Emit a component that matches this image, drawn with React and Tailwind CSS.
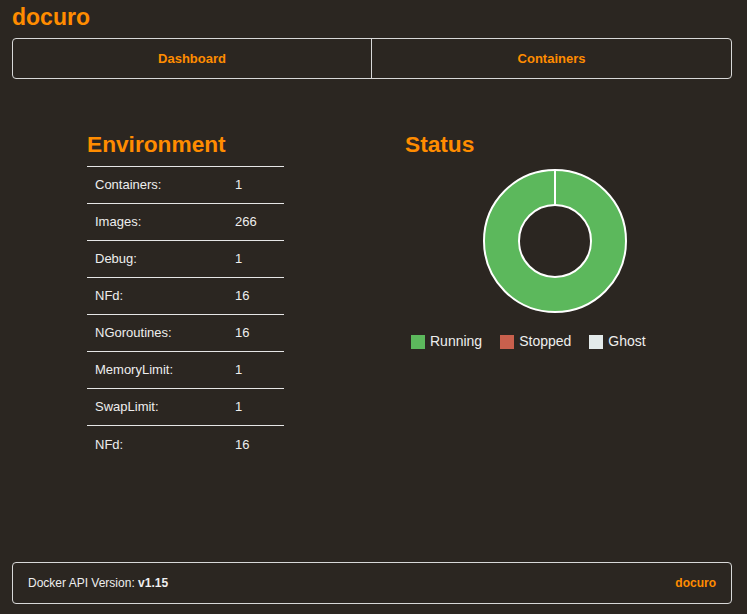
import React from 'react';

const env = [
  ['Containers:', '1'],
  ['Images:', '266'],
  ['Debug:', '1'],
  ['NFd:', '16'],
  ['NGoroutines:', '16'],
  ['MemoryLimit:', '1'],
  ['SwapLimit:', '1'],
  ['NFd:', '16'],
];

const legend = [
  ['Running', 'bg-[#5cb85c]'],
  ['Stopped', 'bg-[#c9604d]'],
  ['Ghost', 'bg-[#e3eaea]'],
];

function Donut() {
  return (
    <svg width="146" height="146" viewBox="0 0 146 146">
      <circle cx="73" cy="73" r="53.5" fill="none" stroke="#5cb85c" strokeWidth="35" />
      <circle cx="73" cy="73" r="71" fill="none" stroke="#fff" strokeWidth="2" />
      <circle cx="73" cy="73" r="36" fill="none" stroke="#fff" strokeWidth="2" />
      <line x1="73" y1="2" x2="73" y2="37" stroke="#fff" strokeWidth="2" />
    </svg>
  );
}

export default function App() {
  return (
    <div className="min-h-screen bg-[#2b2621] font-['Liberation_Sans',Arial,sans-serif] text-[#eeeeee] pl-3 pr-[15px] flex flex-col">
      <h1 className="text-[23px] font-bold text-[#ff8c00] leading-none pt-[6px] h-[38px]">docuro</h1>

      <nav className="grid grid-cols-2 border border-[#d8d8d8] rounded h-[41px]">
        <a className="flex items-center justify-center text-[13px] font-bold text-[#ff8c00] border-r border-[#d8d8d8]">Dashboard</a>
        <a className="flex items-center justify-center text-[13px] font-bold text-[#ff8c00]">Containers</a>
      </nav>

      <main className="flex pt-[52px] flex-1">
        <section className="pl-[75px] w-[393px]">
          <h2 className="text-[22.7px] font-bold text-[#ff8c00] leading-none h-[35px] pt-[2px]">Environment</h2>
          <table className="w-[197px] text-[13px] border-collapse">
            <tbody>
              {env.map(([k, v], i) => (
                <tr key={i} className="h-[37px] border-t border-[#e6e6e6]">
                  <td className="pl-2 w-[148px]">{k}</td>
                  <td>{v}</td>
                </tr>
              ))}
            </tbody>
          </table>
        </section>

        <section>
          <h2 className="text-[22.7px] font-bold text-[#ff8c00] leading-none h-[35px] pt-[2px]">Status</h2>
          <div className="pl-[77px] pt-[2px]">
            <Donut />
          </div>
          <div className="flex items-center gap-[18px] pl-[6px] mt-[17px] text-[14px]">
            {legend.map(([name, cls]) => (
              <div key={name} className="flex items-center gap-[5px]">
                <span className={`w-[14px] h-[14px] ${cls}`} />
                <span>{name}</span>
              </div>
            ))}
          </div>
        </section>
      </main>

      <footer className="mb-[10px] border border-[#d8d8d8] rounded h-[42px] flex items-center justify-between px-[15px] text-[12px]">
        <span>Docker API Version: <b>v1.15</b></span>
        <span className="font-bold text-[#ff8c00]">docuro</span>
      </footer>
    </div>
  );
}
